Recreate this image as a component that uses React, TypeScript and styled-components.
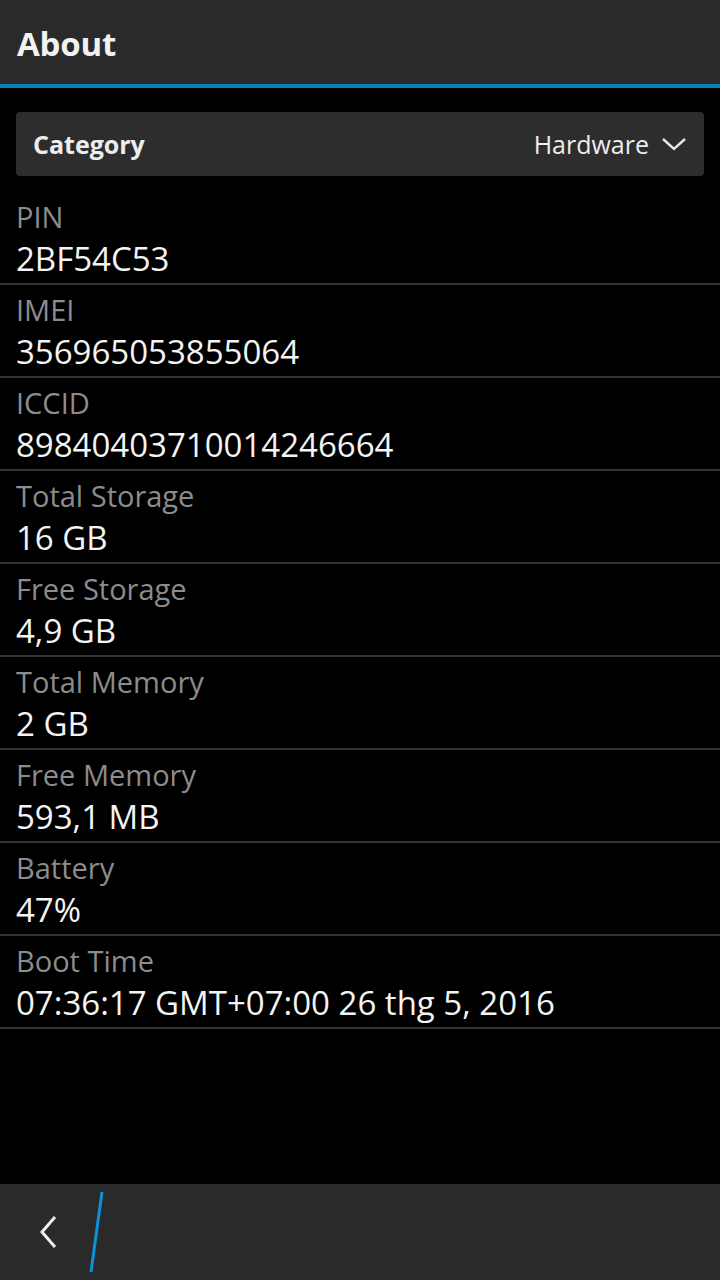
import styled, { createGlobalStyle } from "styled-components";

const GlobalStyle = createGlobalStyle`
  html, body {
    margin: 0;
    padding: 0;
    background: #000;
  }
  body {
    font-family: "Open Sans", "Noto Sans", sans-serif;
    color: #f2f2f2;
  }
`;

const accent = "#0a84b6";

const Screen = styled.div`
  width: 720px;
  height: 1280px;
  display: flex;
  flex-direction: column;
  background: #000;
  overflow: hidden;
`;

const TitleBar = styled.header`
  height: 88px;
  box-sizing: border-box;
  display: flex;
  align-items: center;
  padding: 3px 17px 0;
  background: #2a2a2a;
  border-bottom: 4px solid ${accent};
`;

const Title = styled.h1`
  margin: 0;
  font-size: 33px;
  font-weight: 700;
  color: #f2f2f2;
  letter-spacing: -0.2px;
`;

const Body = styled.main`
  flex: 1;
  display: flex;
  flex-direction: column;
  padding-top: 24px;
`;

const Dropdown = styled.div`
  margin: 0 16px;
  height: 64px;
  display: flex;
  align-items: center;
  justify-content: space-between;
  padding: 0 17px;
  background: #2d2d2d;
  border-radius: 4px;
`;

const DropdownLabel = styled.span`
  font-size: 25px;
  font-weight: 700;
  color: #ededed;
`;

const DropdownValue = styled.span`
  display: flex;
  align-items: center;
  gap: 12px;
  font-size: 25px;
  color: #ededed;
`;

const List = styled.div`
  display: flex;
  flex-direction: column;
  margin-top: 16px;
`;

const Row = styled.div`
  height: 93px;
  box-sizing: border-box;
  display: flex;
  flex-direction: column;
  padding: 7px 16px 0;
  border-bottom: 2px solid #333;
`;

const Label = styled.span`
  font-size: 29px;
  line-height: 36px;
  color: #8c8c8c;
`;

const Value = styled.span`
  margin-top: 4px;
  font-size: 33px;
  line-height: 40px;
  color: #f4f4f4;
  white-space: nowrap;
`;

const BottomBar = styled.footer`
  height: 96px;
  display: flex;
  align-items: center;
  background: #2a2a2a;
  padding-left: 38px;
  gap: 27px;
`;

const Chevron = () => (
  <svg width="26" height="16" viewBox="0 0 26 16">
    <path d="M2 3 L13 13 L24 3" fill="none" stroke="#e8e8e8" strokeWidth="2.4" />
  </svg>
);

const BackIcon = () => (
  <svg width="22" height="36" viewBox="0 0 22 36">
    <path d="M17 3 L4 18 L17 33" fill="none" stroke="#f0f0f0" strokeWidth="3" />
  </svg>
);

const Slash = () => (
  <svg width="20" height="84" viewBox="0 0 20 84">
    <path d="M15 2 L4 82" stroke="#0a93d6" strokeWidth="3" />
  </svg>
);

const items = [
  { label: "PIN", value: "2BF54C53" },
  { label: "IMEI", value: "356965053855064" },
  { label: "ICCID", value: "89840403710014246664" },
  { label: "Total Storage", value: "16 GB" },
  { label: "Free Storage", value: "4,9 GB" },
  { label: "Total Memory", value: "2 GB" },
  { label: "Free Memory", value: "593,1 MB" },
  { label: "Battery", value: "47%" },
  { label: "Boot Time", value: "07:36:17 GMT+07:00 26 thg 5, 2016" },
];

export default function App() {
  return (
    <Screen>
      <GlobalStyle />
      <TitleBar>
        <Title>About</Title>
      </TitleBar>
      <Body>
        <Dropdown>
          <DropdownLabel>Category</DropdownLabel>
          <DropdownValue>
            Hardware
            <Chevron />
          </DropdownValue>
        </Dropdown>
        <List>
          {items.map((item) => (
            <Row key={item.label}>
              <Label>{item.label}</Label>
              <Value>{item.value}</Value>
            </Row>
          ))}
        </List>
      </Body>
      <BottomBar>
        <BackIcon />
        <Slash />
      </BottomBar>
    </Screen>
  );
}
